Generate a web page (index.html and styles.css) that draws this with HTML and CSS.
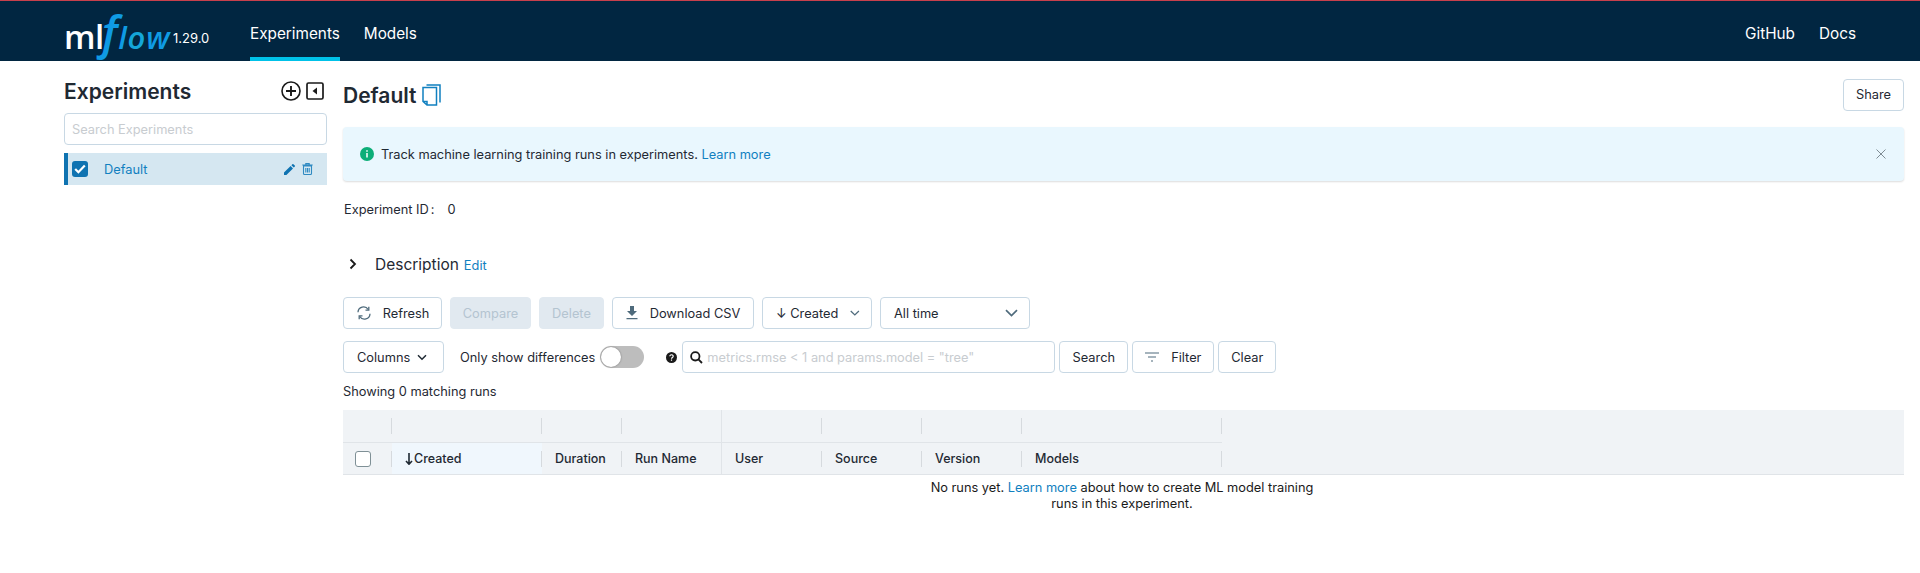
FILE: index.html
```html
<!DOCTYPE html>
<html lang="en">
<head>
  <meta charset="UTF-8">
  <title>MLflow Experiments</title>
  <link rel="stylesheet" href="styles.css">
</head>
<body>

<header class="topbar">
  <div class="logo"><span class="logo-ml">ml</span><span class="logo-flow"><span class="logo-f">f</span>l<span class="logo-o">o</span>w</span></div>
  <span class="version">1.29.0</span>
  <nav class="nav">
    <a class="nav-item active">Experiments</a>
    <a class="nav-item">Models</a>
  </nav>
  <nav class="nav-right">
    <a>GitHub</a>
    <a>Docs</a>
  </nav>
</header>

<div class="page">
  <aside class="sidebar">
    <div class="side-head">
      <h2>Experiments</h2>
      <svg class="side-icon" width="20" height="20" viewBox="0 0 20 20" fill="none" stroke="#1a1a1a" stroke-width="1.6">
        <circle cx="10" cy="10" r="9"/><path d="M10 5v10M5 10h10" stroke-width="1.9"/>
      </svg>
      <svg class="side-icon" width="18" height="18" viewBox="0 0 18 18" fill="none">
        <rect x="1" y="1" width="16" height="16" rx="1.5" stroke="#1a1a1a" stroke-width="1.7"/>
        <path d="M11 5.5v7L6.5 9z" fill="#1a1a1a"/>
      </svg>
    </div>
    <input class="side-search" type="text" placeholder="Search Experiments">
    <div class="side-item">
      <span class="side-check">
        <svg width="12" height="10" viewBox="0 0 12 10" fill="none" stroke="#fff" stroke-width="2.2"><path d="M1.2 5l3.2 3.2L10.8 1.6"/></svg>
      </span>
      <span class="side-name">Default</span>
      <svg class="pencil" width="11" height="11" viewBox="0 0 11 11" fill="#0f73b1"><path d="M0 11V8.6L6.6 2l2.4 2.4L2.4 11zM7.4 1.2 8.4.2a.7.7 0 0 1 1 0l1.400 1.400a.7.7 0 0 1 0 1l-1 1z"/></svg>
      <svg class="trash" width="11" height="12" viewBox="0 0 11 12" fill="none" stroke="#2f8ac2" stroke-width="1.100"><path d="M1.500 3h8v7.500a1 1 0 0 1-1 1h-6a1 1 0 0 1-1-1zM.3 2h10.400M3.800 2V.6h3.400V2M3.800 5v4.500M5.500 5v4.500M7.200 5v4.500"/></svg>
    </div>
  </aside>

  <main class="main">
    <div class="title-row">
      <h1>Default</h1>
      <svg class="copy-icon" width="19" height="22" viewBox="0 0 19 22" fill="none" stroke="#1180c0" stroke-width="1.500">
        <path d="M4.500 1h13.500v17.500M1 3.500h13.500v17.500H5L1 17.500zM1 17.500h4V21"/>
      </svg>
      <button class="btn share-btn">Share</button>
    </div>

    <div class="alert">
      <svg width="14" height="14" viewBox="0 0 14 14"><circle cx="7" cy="7" r="7" fill="#0cae78"/><path d="M7 6v4.500M7 3.200v1.500" stroke="#fff" stroke-width="1.500"/></svg>
      <span class="alert-text">Track machine learning training runs in experiments. <a>Learn more</a></span>
      <svg class="alert-close" width="10" height="10" viewBox="0 0 10 10" stroke="#7f8c94" stroke-width="1"><path d="M.5.5l9 9M9.500.5l-9 9"/></svg>
    </div>

    <div class="exp-id">Experiment ID<span class="colon">:</span>0</div>

    <div class="desc">
      <svg width="8" height="12" viewBox="0 0 8 12" fill="none" stroke="#1a1a1a" stroke-width="1.800"><path d="M1.500 1.500 6 6l-4.500 4.500"/></svg>
      <span class="desc-label">Description</span>
      <a class="desc-edit">Edit</a>
    </div>

    <div class="toolbar">
      <button class="btn w-refresh">
        <svg width="16" height="14" viewBox="0 0 16 14" fill="none" stroke="#4f6b7c" stroke-width="1.300"><path d="M2 6.200A5.500 5.500 0 0 1 12.200 3.500M14 7.800A5.500 5.500 0 0 1 3.800 10.500"/><path d="M12.800 .8v3.400H9.500M3.200 13.200V9.800h3.300"/></svg>
        <span>Refresh</span>
      </button>
      <button class="btn btn-off w-compare">Compare</button>
      <button class="btn btn-off w-delete">Delete</button>
      <button class="btn w-download">
        <svg width="12" height="14" viewBox="0 0 12 14" fill="#4f6b7c"><path d="M4 0h4v5h3L6 10 1 5h3zM.5 12h11v1.300H.5z"/></svg>
        <span>Download CSV</span>
      </button>
      <div class="btn select w-created"><span class="nowrap">↓ Created</span>
        <svg width="13" height="8" viewBox="0 0 13 8" fill="none" stroke="#4f6b7c" stroke-width="1.700"><path d="M1 1.200l5.500 5.300L12 1.200"/></svg>
      </div>
      <div class="btn select w-time"><span>All time</span>
        <svg width="13" height="8" viewBox="0 0 13 8" fill="none" stroke="#4f6b7c" stroke-width="1.700"><path d="M1 1.200l5.500 5.300L12 1.200"/></svg>
      </div>
    </div>

    <div class="toolbar">
      <button class="btn w-columns">
        <span>Columns</span>
        <svg width="10" height="7" viewBox="0 0 10 7" fill="none" stroke="#1f2933" stroke-width="1.500"><path d="M1 1.200l4 4 4-4"/></svg>
      </button>
      <span class="diff-label">Only show differences</span>
      <span class="toggle"><span class="knob"></span></span>
      <svg class="help" width="11" height="11" viewBox="0 0 11 11"><circle cx="5.500" cy="5.500" r="5.500" fill="#1a1a1a"/><path d="M3.800 4.200a1.700 1.500 0 1 1 2.500 1.400c-.6.300-.8.600-.8 1.100M5.500 7.600v1.100" fill="none" stroke="#fff" stroke-width="1.200"/></svg>
      <div class="run-search">
        <svg width="13" height="13" viewBox="0 0 13 13" fill="none" stroke="#1a1a1a" stroke-width="1.800"><circle cx="5.300" cy="5.300" r="4.200"/><path d="M8.400 8.400 12 12"/></svg>
        <input type="text" placeholder='metrics.rmse &lt; 1 and params.model = "tree"'>
      </div>
      <button class="btn w-search">Search</button>
      <button class="btn w-filter">
        <svg width="14" height="10" viewBox="0 0 14 10" stroke="#4f6b7c" stroke-width="1.200"><path d="M0 1h14M3 5h8M6 9h2"/></svg>
        <span>Filter</span>
      </button>
      <button class="btn w-clear">Clear</button>
    </div>

    <div class="showing">Showing 0 matching runs</div>

    <div class="table-head">
      <div class="th"><span class="th-in"></span></div>
      <div class="th"><span class="th-in"></span></div>
      <div class="th"><span class="th-in"></span></div>
      <div class="th group-end"><span class="th-in"></span></div>
      <div class="th"><span class="th-in"></span></div>
      <div class="th"><span class="th-in"></span></div>
      <div class="th"><span class="th-in"></span></div>
      <div class="th"><span class="th-in"></span></div>
      <div class="th-rest"></div>

      <div class="th lower"><span class="th-in"><span class="table-check"></span></span></div>
      <div class="th lower sorted"><span class="th-in"><svg width="8" height="12" viewBox="0 0 8 12" fill="none" stroke="#1f2933" stroke-width="1.600"><path d="M4 0v11M1 8l3 3.200L7 8"/></svg>Created</span></div>
      <div class="th lower"><span class="th-in">Duration</span></div>
      <div class="th lower group-end"><span class="th-in">Run Name</span></div>
      <div class="th lower"><span class="th-in">User</span></div>
      <div class="th lower"><span class="th-in">Source</span></div>
      <div class="th lower"><span class="th-in">Version</span></div>
      <div class="th lower"><span class="th-in">Models</span></div>
      <div class="th-rest"></div>
    </div>

    <p class="empty">No runs yet. <a>Learn more</a> about how to create ML model training runs in this experiment.</p>
  </main>
</div>

</body>
</html>
```

FILE: styles.css
```css
* {
  box-sizing: border-box;
}

html, body {
  height: 100%;
}

body {
  margin: 0;
  font-family: Inter, "Liberation Sans", sans-serif;
  font-size: 12.8px;
  color: #1f2933;
  background: #fff;
  overflow: hidden;
}

a {
  color: #1180c0;
  text-decoration: none;
}

.nowrap {
  white-space: nowrap;
}

/* top bar */
.topbar {
  height: 61px;
  display: flex;
  align-items: stretch;
  padding-left: 64px;
  background: #012641;
  border-top: 1px solid #c8404c;
  color: #fff;
}

.logo {
  width: 103px;
  display: flex;
  align-items: baseline;
  padding-top: 7px;
  white-space: nowrap;
  line-height: 40px;
}

.logo-ml {
  font-family: "Open Sans", sans-serif;
  font-size: 33px;
  font-weight: 600;
  letter-spacing: -0.5px;
}

.logo-flow {
  font-family: "Open Sans", sans-serif;
  font-size: 31px;
  font-style: italic;
  font-weight: 600;
  letter-spacing: 0.8px;
  color: #0f9be4;
}

.logo-f {
  font-size: 46px;
  line-height: 1;
  margin-left: -2px;
}

.logo-o {
  color: #14a6d8;
}

.version {
  margin: 29px 0 0 6px;
  width: 40px;
  font-size: 13px;
  line-height: 16px;
}

.nav {
  display: flex;
  gap: 24px;
  margin-left: 37px;
}

.nav-item {
  color: #fff;
  font-size: 15.3px;
  line-height: 20px;
  padding-top: 23px;
  border-bottom: 4px solid transparent;
}

.nav-item.active {
  border-bottom-color: #00c2e8;
}

.nav-right {
  margin-left: auto;
  margin-right: 64px;
  display: flex;
  gap: 24px;
  padding-top: 23px;
  font-size: 15.3px;
  line-height: 20px;
}

.nav-right a {
  color: #fff;
}

/* layout */
.page {
  display: flex;
  padding: 0 16px 0 64px;
}

.sidebar {
  width: 263px;
  flex: none;
}

.main {
  margin-left: 16px;
  flex: 1;
  min-width: 0;
}

/* sidebar */
.side-head {
  height: 52px;
  display: flex;
  align-items: center;
  padding-top: 7px;
}

.side-head h2 {
  margin: 2px auto 0 0;
  font-size: 21px;
  font-weight: 600;
}

.side-icon {
  margin-right: 3px;
}

.side-icon + .side-icon {
  margin-left: 2px;
}

.side-search {
  display: block;
  width: 100%;
  height: 32px;
  padding: 0 7px;
  border: 1px solid #c8d8e4;
  border-radius: 4px;
  font: inherit;
  outline: none;
}

.side-search::placeholder,
.run-search input::placeholder {
  color: #c8ccd0;
}

.side-item {
  margin-top: 8px;
  height: 32px;
  display: flex;
  align-items: center;
  padding-left: 4px;
  background: #d5e7f1;
  border-left: 4px solid #0f73b1;
}

.side-check {
  width: 16px;
  height: 16px;
  display: flex;
  align-items: center;
  justify-content: center;
  background: #0f73b1;
  border-radius: 3px;
}

.side-name {
  margin-left: 16px;
  color: #1180c0;
}

.pencil {
  margin-left: auto;
}

.trash {
  margin: 0 14px 0 7px;
}

/* title */
.title-row {
  height: 66px;
  display: flex;
  align-items: center;
  padding-top: 4px;
}

.title-row h1 {
  margin: 0 5px 0 0;
  font-size: 21px;
  font-weight: 600;
  line-height: 28px;
}

.copy-icon {
  margin-top: -2px;
}

.share-btn {
  margin-left: auto;
  margin-top: -3px;
  width: 61px;
}

/* alert */
.alert {
  height: 54px;
  display: flex;
  align-items: center;
  padding: 0 14px 0 17px;
  background: #e9f7fe;
  border-radius: 4px;
  box-shadow: 0 1px 2px rgba(0, 0, 0, 0.14);
}

.alert-text {
  margin-left: 7px;
}

.alert-close {
  margin-left: auto;
  margin-right: 4px;
}

.exp-id {
  margin: 21px 0 0 1px;
  line-height: 16px;
}

.colon {
  margin: 0 13px 0 2px;
}

.desc {
  margin-top: 34px;
  height: 24px;
  display: flex;
  align-items: center;
  padding-left: 6px;
}

.desc-label {
  margin-left: 18px;
  font-size: 15.5px;
}

.desc-edit {
  margin-left: 5px;
  margin-top: 2px;
}

/* toolbars */
.toolbar {
  display: flex;
  align-items: center;
  gap: 8px;
  height: 32px;
  margin-top: 12px;
}

.desc + .toolbar {
  margin-top: 21px;
}

.btn {
  height: 32px;
  display: inline-flex;
  align-items: center;
  justify-content: center;
  gap: 12px;
  padding: 0;
  background: #fff;
  border: 1px solid #c8d8e4;
  border-radius: 4px;
  color: #1f2933;
  font: inherit;
  flex: none;
}

.btn-off {
  background: #e1e9f0;
  border-color: #e1e9f0;
  color: #b4c4d0;
}

.select {
  justify-content: space-between;
  padding: 0 11px 0 13px;
}

.w-refresh { width: 99px; gap: 11px; }
.w-compare { width: 81px; }
.w-delete { width: 65px; }
.w-download { width: 142px; }
.w-created { width: 110px; }
.w-time { width: 150px; }
.w-columns { width: 101px; justify-content: flex-start; gap: 7px; padding-left: 13px; }
.w-search { width: 69px; margin-left: -4px; }
.w-filter { width: 82px; margin-left: -4px; }
.w-clear { width: 58px; margin-left: -4px; }

.diff-label {
  margin-left: 8px;
}

.toggle {
  width: 44px;
  height: 22px;
  margin-left: -3px;
  padding: 1px;
  background: #bdbdbd;
  border-radius: 11px;
}

.knob {
  display: block;
  width: 20px;
  height: 20px;
  background: #fff;
  border-radius: 50%;
  box-shadow: 0 0 2px rgba(0, 0, 0, 0.4);
}

.help {
  margin-left: 14px;
}

.run-search {
  width: 373px;
  height: 32px;
  margin-left: -3px;
  display: flex;
  align-items: center;
  gap: 4px;
  padding-left: 7px;
  border: 1px solid #c8d8e4;
  border-radius: 4px;
}

.run-search input {
  flex: 1;
  border: 0;
  padding: 0;
  font: inherit;
  outline: none;
}

.showing {
  margin-top: 11px;
  line-height: 16px;
}

/* runs table */
.table-head {
  margin-top: 10px;
  display: grid;
  grid-template-columns: 49px 150px 80px 100px 100px 100px 100px 200px 1fr;
  grid-template-rows: 33px 31px;
  background: #f0f3f6;
  border-bottom: 1px solid #e0e4e8;
  font-size: 12.5px;
  font-weight: 500;
}

.th {
  display: flex;
  align-items: center;
  border-bottom: 1px solid #e0e4e8;
}

.th.lower {
  border-bottom: 0;
}

.th-in {
  width: 100%;
  height: 16px;
  display: flex;
  align-items: center;
  gap: 1px;
  padding-left: 13px;
  border-right: 1px solid #d6dade;
}

.group-end {
  border-right: 1px solid #e0e4e8;
}

.group-end .th-in {
  border-right: 0;
}

.sorted {
  background: #f0f7fd;
}

.table-check {
  width: 16px;
  height: 16px;
  margin-left: -1px;
  background: #fff;
  border: 1px solid #7f9096;
  border-radius: 3px;
}

.empty {
  width: 400px;
  margin: 5px auto 0 579px;
  text-align: center;
  line-height: 16px;
  color: #1a1a1a;
}
```
